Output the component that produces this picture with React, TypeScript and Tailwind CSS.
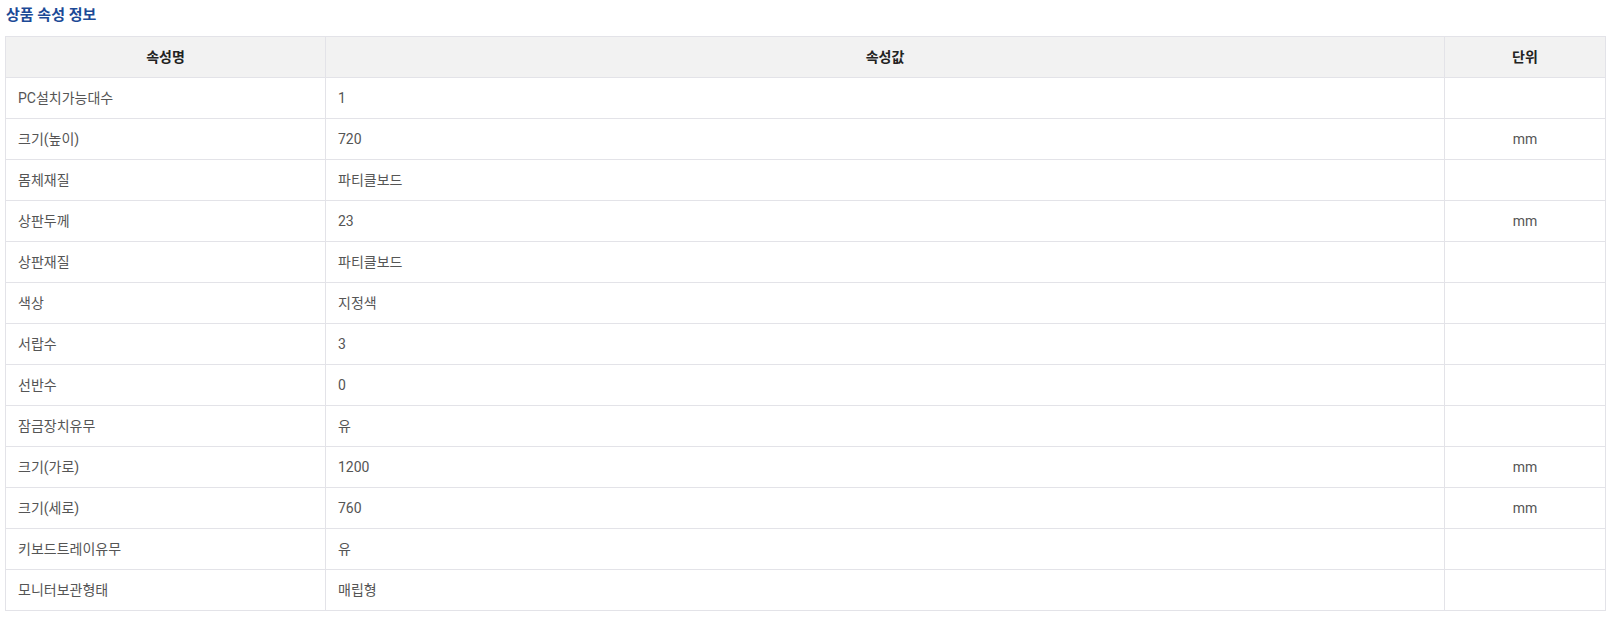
import React from 'react';

interface Attr { name: string; value: string; unit: string; }

const ATTRS: Attr[] = [
  { name: 'PC설치가능대수', value: '1', unit: '' },
  { name: '크기(높이)', value: '720', unit: 'mm' },
  { name: '몸체재질', value: '파티클보드', unit: '' },
  { name: '상판두께', value: '23', unit: 'mm' },
  { name: '상판재질', value: '파티클보드', unit: '' },
  { name: '색상', value: '지정색', unit: '' },
  { name: '서랍수', value: '3', unit: '' },
  { name: '선반수', value: '0', unit: '' },
  { name: '잠금장치유무', value: '유', unit: '' },
  { name: '크기(가로)', value: '1200', unit: 'mm' },
  { name: '크기(세로)', value: '760', unit: 'mm' },
  { name: '키보드트레이유무', value: '유', unit: '' },
  { name: '모니터보관형태', value: '매립형', unit: '' },
];

const App: React.FC = () => {
  return (
    <div className="bg-white min-h-screen px-[5px] font-['Roboto','Noto_Sans_CJK_KR',sans-serif]">
      <h2 className="h-[30px] leading-[30px] pl-[1px] text-[15px] font-bold text-[#1c4a96]">상품 속성 정보</h2>
      <table className="mt-[6px] w-[1600px] border-collapse table-fixed text-[14px]">
        <colgroup>
          <col className="w-[320px]" />
          <col className="w-[1119px]" />
          <col className="w-[161px]" />
        </colgroup>
        <thead>
          <tr className="bg-[#f2f2f2]">
            <th className="h-[41px] border border-[#e3e3e8] font-bold text-[#222] text-center">속성명</th>
            <th className="h-[41px] border border-[#e3e3e8] font-bold text-[#222] text-center">속성값</th>
            <th className="h-[41px] border border-[#e3e3e8] font-bold text-[#222] text-center">단위</th>
          </tr>
        </thead>
        <tbody>
          {ATTRS.map(a => (
            <tr key={a.name}>
              <td className="h-[41px] border border-[#e3e3e8] px-3 text-[#555]">{a.name}</td>
              <td className="h-[41px] border border-[#e3e3e8] px-3 text-[#555]">{a.value}</td>
              <td className="h-[41px] border border-[#e3e3e8] px-3 text-[#555] text-center">{a.unit}</td>
            </tr>
          ))}
        </tbody>
      </table>
    </div>
  );
};

export default App;
